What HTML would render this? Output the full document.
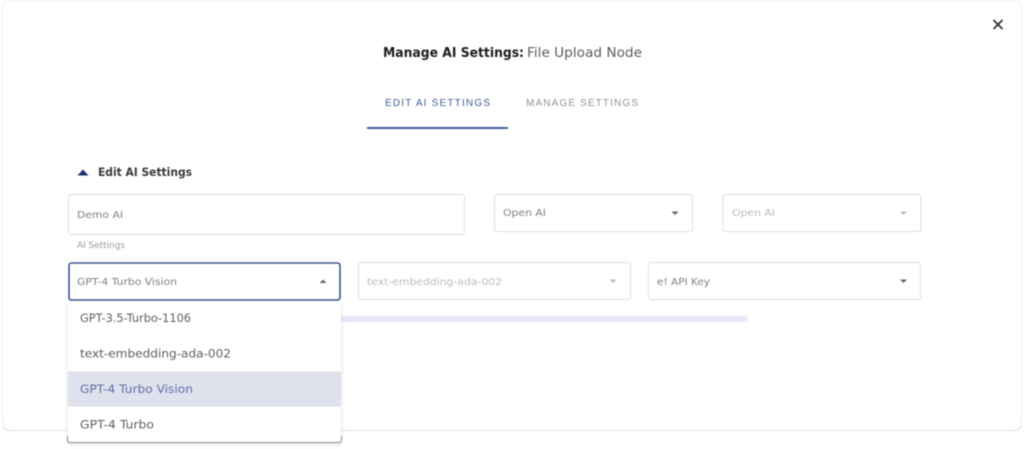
<!DOCTYPE html>
<html>
<head>
<meta charset="utf-8">
<style>
html,body{margin:0;padding:0;background:#fff;width:1024px;height:449px;overflow:hidden}
svg{display:block;filter:blur(.4px)}
text{font-family:"DejaVu Sans","Liberation Sans",sans-serif}
.l{font-family:"Liberation Sans",sans-serif}
</style>
</head>
<body>
<svg width="1024" height="449" viewBox="0 0 1024 449" xmlns="http://www.w3.org/2000/svg">
<defs>
<filter id="s" x="-10%" y="-10%" width="120%" height="120%"><feDropShadow dx="0" dy="1" stdDeviation="2" flood-color="#000" flood-opacity=".14"/></filter>
</defs>
<rect x="2.500" y="0.500" width="1019" height="430" rx="8" fill="#fff" stroke="#f3f3f3"/>
<path d="M3 424 Q3 430.500 10 430.500 H1014 Q1021 430.500 1021 424" fill="none" stroke="#e4e4e4"/>
<path d="M993.500 20 L1002.500 29 M1002.500 20 L993.500 29" stroke="#333" stroke-width="1.700" fill="none"/>

<text x="383" y="57" font-size="13" font-weight="700" fill="#1d1d1d" textLength="141" lengthAdjust="spacingAndGlyphs">Manage AI Settings:</text>
<text x="527" y="57" font-size="13" fill="#5c5c5c" textLength="115" lengthAdjust="spacingAndGlyphs">File Upload Node</text>

<text class="l" x="385" y="106" font-size="10" fill="#3f5b98" textLength="105" lengthAdjust="spacing">EDIT AI SETTINGS</text>
<text class="l" x="526" y="106" font-size="10" fill="#929292" textLength="112" lengthAdjust="spacing">MANAGE SETTINGS</text>
<rect x="367" y="127" width="141" height="2" fill="#3f5b98"/>

<path d="M77.500 175.500 L83 169.500 L88.500 175.500 Z" fill="#1c2f6e"/>
<text x="98" y="176" font-size="11.500" font-weight="700" fill="#3a3a3a" textLength="94" lengthAdjust="spacingAndGlyphs">Edit AI Settings</text>

<rect x="68.500" y="194.500" width="396" height="40" rx="2.500" fill="#fff" stroke="#dedede"/>
<text x="77" y="218" font-size="10" fill="#808080" textLength="46" lengthAdjust="spacingAndGlyphs">Demo AI</text>
<text x="77" y="248" font-size="8.500" fill="#999" textLength="48" lengthAdjust="spacingAndGlyphs">AI Settings</text>

<rect x="494.500" y="194.500" width="198" height="37" rx="2.500" fill="#fff" stroke="#dedede"/>
<text x="503" y="216" font-size="10" fill="#808080" textLength="43" lengthAdjust="spacingAndGlyphs">Open AI</text>
<path d="M671.500 211.500 L678.500 211.500 L675 215 Z" fill="#666"/>

<rect x="723" y="194.500" width="198" height="37" rx="2.500" fill="#fff" stroke="#dedede"/>
<text x="732" y="216" font-size="10" fill="#bcbcbc" textLength="43" lengthAdjust="spacingAndGlyphs">Open AI</text>
<path d="M900 211.500 L907 211.500 L903.500 215 Z" fill="#bbb"/>

<rect x="340" y="316" width="408" height="6" rx="3" fill="#e8e6f8"/>

<rect x="358.500" y="262.500" width="272" height="37" rx="2.500" fill="#fff" stroke="#dedede"/>
<text x="367" y="285" font-size="10" fill="#bcbcbc" textLength="135" lengthAdjust="spacingAndGlyphs">text-embedding-ada-002</text>
<path d="M609.500 279.500 L616.500 279.500 L613 283 Z" fill="#bbb"/>

<rect x="648.500" y="262.500" width="272" height="37" rx="2.500" fill="#fff" stroke="#dedede"/>
<text x="657" y="285" font-size="10" fill="#808080" textLength="53" lengthAdjust="spacingAndGlyphs">e! API Key</text>
<path d="M900 279.500 L907 279.500 L903.500 283 Z" fill="#666"/>

<rect x="69" y="263" width="271" height="37" rx="2.500" fill="#fff" stroke="#3f5590" stroke-width="1.600"/>
<text x="77" y="285" font-size="10" fill="#808080" textLength="100" lengthAdjust="spacingAndGlyphs">GPT-4 Turbo Vision</text>
<path d="M319.500 283 L326.500 283 L323 279.500 Z" fill="#666"/>

<rect x="68" y="301" width="273" height="142" rx="2" fill="#fff" filter="url(#s)"/>
<path d="M67.500 436 V440 Q67.500 442.500 70 442.500 H339 Q341.500 442.500 341.500 440 V436" fill="none" stroke="#8e8e8e" stroke-width="1"/>
<rect x="68" y="371.500" width="273" height="35" fill="#dfe1ec"/>
<text x="80" y="322" font-size="11.500" fill="#606060" textLength="111" lengthAdjust="spacingAndGlyphs">GPT-3.5-Turbo-1106</text>
<text x="80" y="357.500" font-size="11.500" fill="#606060" textLength="151" lengthAdjust="spacingAndGlyphs">text-embedding-ada-002</text>
<text x="80" y="393" font-size="11.500" fill="#6070a8" textLength="113" lengthAdjust="spacingAndGlyphs">GPT-4 Turbo Vision</text>
<text x="80" y="428.500" font-size="11.500" fill="#606060" textLength="74" lengthAdjust="spacingAndGlyphs">GPT-4 Turbo</text>
</svg>
</body>
</html>
